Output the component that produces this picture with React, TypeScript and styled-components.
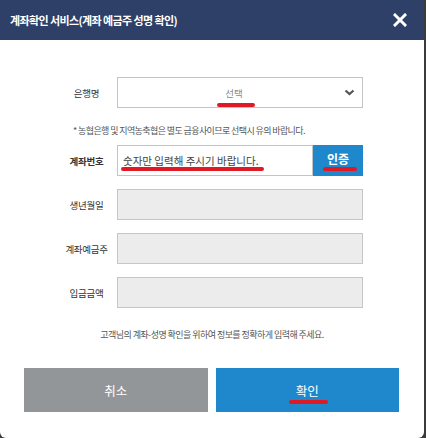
import React from "react";
import styled, { createGlobalStyle } from "styled-components";

const Global = createGlobalStyle`
  html, body { margin: 0; padding: 0; background: #3b3b3b; }
  body { font-family: "Noto Sans CJK KR", "Noto Sans", sans-serif; }
  * { box-sizing: border-box; }
`;

const Modal = styled.div`
  width: 424px;
  height: 438px;
  background: #fff;
  border-radius: 0 0 6px 6px;
  overflow: hidden;
  display: flex;
  flex-direction: column;
`;

const Header = styled.div`
  height: 40px;
  background: #2e3f68;
  display: flex;
  align-items: center;
  justify-content: space-between;
  padding: 0 17px 0 10px;
`;

const Title = styled.h1`
  margin: 0;
  color: #fff;
  font-size: 11px;
  font-weight: 700;
  letter-spacing: -0.6px;
`;

const Close = styled.button`
  border: 0;
  background: none;
  padding: 0;
  width: 14px;
  height: 14px;
  display: flex;
  cursor: pointer;
`;

const Body = styled.div`
  padding: 37px 61px 0 56px;
  display: flex;
  flex-direction: column;
`;

const Row = styled.div<{ $mt?: number }>`
  display: grid;
  grid-template-columns: 61px 1fr;
  align-items: center;
  height: 31px;
  margin-top: ${(p) => p.$mt ?? 0}px;
`;

const Label = styled.label<{ $bold?: boolean }>`
  text-align: center;
  font-size: 9.5px;
  letter-spacing: -0.3px;
  color: #333;
  font-weight: ${(p) => (p.$bold ? 700 : 400)};
`;

const Select = styled.div`
  position: relative;
  height: 31px;
  border: 1px solid #c4c4c4;
  display: flex;
  align-items: center;
  justify-content: center;
  padding-right: 12px;
  font-size: 9.5px;
  color: #8a8a8a;
`;

const Chevron = styled.svg`
  position: absolute;
  right: 7px;
  top: 11px;
`;

const Mark = styled.span<{ $w: number; $l?: number; $b?: number }>`
  position: absolute;
  left: ${(p) => p.$l ?? 0}px;
  bottom: ${(p) => p.$b ?? -6}px;
  width: ${(p) => p.$w}px;
  height: 4px;
  border-radius: 2px;
  background: #e01a24;
`;

const Marked = styled.span`
  position: relative;
  display: inline-block;
`;

const Notice = styled.p`
  margin: 16px 0 0 17px;
  font-size: 9px;
  letter-spacing: -0.6px;
  color: #555;
`;

const InputGroup = styled.div`
  display: flex;
  height: 31px;
`;

const TextBox = styled.div`
  position: relative;
  flex: 1;
  border: 1px solid #c4c4c4;
  display: flex;
  align-items: center;
  padding-left: 5px;
  font-size: 10.5px;
  color: #444;
`;

const AuthButton = styled.button`
  width: 50px;
  border: 0;
  background: #1f87cc;
  color: #fff;
  font-family: inherit;
  font-size: 12px;
  font-weight: 700;
  display: flex;
  align-items: center;
  justify-content: center;
  padding: 0 0 4px;
`;

const Disabled = styled.div`
  height: 31px;
  background: #ececec;
  border: 1px solid #c6c6c6;
`;

const Footer = styled.p`
  margin: 20px 0 0;
  text-align: center;
  font-size: 9px;
  letter-spacing: -0.55px;
  color: #555;
`;

const Buttons = styled.div`
  display: flex;
  gap: 8px;
  padding: 0 25px 0 24px;
  margin-top: 27px;
`;

const Btn = styled.button<{ $primary?: boolean }>`
  flex: 1;
  height: 44px;
  border: 0;
  background: ${(p) => (p.$primary ? "#1f87cc" : "#939699")};
  color: #fff;
  font-family: inherit;
  font-size: 12.5px;
  display: flex;
  align-items: center;
  justify-content: center;
`;

export default function App() {
  return (
    <>
      <Global />
      <Modal>
        <Header>
          <Title>계좌확인 서비스(계좌 예금주 성명 확인)</Title>
          <Close aria-label="닫기">
            <svg width="14" height="14" viewBox="0 0 14 14">
              <path d="M2 2 L12 12 M12 2 L2 12" stroke="#fff" strokeWidth="3" strokeLinecap="square" />
            </svg>
          </Close>
        </Header>
        <Body>
          <Row>
            <Label>은행명</Label>
            <Select>
              <Marked>
                선택
                <Mark $w={38} $l={-8} $b={-7} />
              </Marked>
              <Chevron width="11" height="7" viewBox="0 0 11 7">
                <path d="M1.5 1.5 L5.5 5 L9.5 1.5" stroke="#555" strokeWidth="2.2" fill="none" />
              </Chevron>
            </Select>
          </Row>
          <Notice>* 농협은행 및 지역농축협은 별도 금융사이므로 선택시 유의 바랍니다.</Notice>
          <Row $mt={8}>
            <Label $bold>계좌번호</Label>
            <InputGroup>
              <TextBox>
                숫자만 입력해 주시기 바랍니다.
                <Mark $w={143} $l={3} $b={4} />
              </TextBox>
              <AuthButton>
                <Marked>
                  인증
                  <Mark $w={34} $l={-4} $b={-4} />
                </Marked>
              </AuthButton>
            </InputGroup>
          </Row>
          <Row $mt={13}>
            <Label>생년월일</Label>
            <Disabled />
          </Row>
          <Row $mt={13}>
            <Label>계좌예금주</Label>
            <Disabled />
          </Row>
          <Row $mt={13}>
            <Label>입금금액</Label>
            <Disabled />
          </Row>
        </Body>
        <Footer>고객님의 계좌-성명 확인을 위하여 정보를 정확하게 입력해 주세요.</Footer>
        <Buttons>
          <Btn>취소</Btn>
          <Btn $primary>
            <Marked>
              확인
              <Mark $w={39} $l={-7} $b={-4} />
            </Marked>
          </Btn>
        </Buttons>
      </Modal>
    </>
  );
}
